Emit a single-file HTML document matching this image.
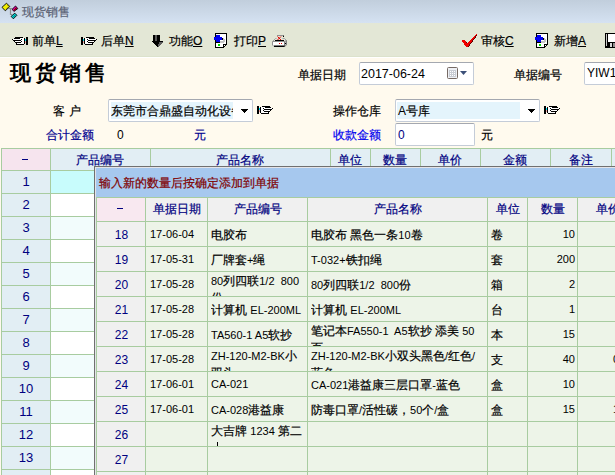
<!DOCTYPE html><html><head><meta charset="utf-8"><style>
*{margin:0;padding:0;box-sizing:border-box}
html,body{width:615px;height:475px;overflow:hidden;background:#fffaee;font-family:"Liberation Sans",sans-serif;font-size:12px;color:#000;-webkit-text-stroke-width:0.2px}
div,span.a{position:absolute;white-space:nowrap}
svg{position:absolute;shape-rendering:crispEdges}
.u{text-decoration:underline;position:static}
.u0{position:static;-webkit-text-stroke-width:0}
.box{background:#fff;border:1px solid #c4ccd8;border-top-color:#a4a8b0;border-radius:2px}
.hd{color:#1c1c8c;text-align:center}
.c{text-align:center}
.r{text-align:right}
</style></head><body>
<div style="left:0px;top:0px;width:615px;height:23px;background:linear-gradient(#c1cedc,#d5e2f2)"></div>
<svg style="left:0;top:0;shape-rendering:auto" width="20" height="22" viewBox="0 0 20 22"><path d="M8.5 8.5 H12.5 M10.5 8.5 V14.5 H12" stroke="#8c8c8c" stroke-width="1.2" fill="none"/><path d="M6.5 3.2 L9.8 6.5 L5.3 10.8 L2 7.3 Z" fill="#f0f000" stroke="#000" stroke-width="0.9"/><path d="M7 5 L8.5 6.5 L5.5 9.5" stroke="#b0a000" stroke-width="0.8" fill="none"/><path d="M15.5 6 L17.8 8.6 L13.9 11.4 L12.2 9.3 Z" fill="#e000c0" stroke="#000" stroke-width="0.9"/><path d="M16.5 7.8 L14 10.5" stroke="#900000" stroke-width="1.3"/><path d="M14.8 13.2 L16.9 15.3 L13.4 18.8 L11.1 16.4 Z" fill="#00d8d8" stroke="#000" stroke-width="0.9"/><path d="M15.6 14.6 L13 17.4" stroke="#007070" stroke-width="1"/></svg>
<div style="left:22px;top:4px;color:#5a6274">现货销售</div>
<div style="left:0px;top:23px;width:615px;height:34px;background:#e3e7d6"></div>
<div style="left:0px;top:56px;width:615px;height:1px;background:#dce2cc"></div>
<div style="left:0px;top:57px;width:615px;height:1px;background:#ffffff"></div>
<div style="left:32px;top:33px;">前单<span class="u">L</span></div>
<div style="left:101px;top:33px;">后单<span class="u">N</span></div>
<div style="left:169px;top:33px;">功能<span class="u">O</span></div>
<div style="left:234px;top:33px;">打印<span class="u">P</span></div>
<div style="left:481px;top:33px;">审核<span class="u">C</span></div>
<div style="left:554px;top:33px;">新增<span class="u">A</span></div>
<svg style="left:12px;top:37px" width="16" height="8" viewBox="0 0 16 8"><rect x="3" y="0" width="1" height="1" fill="#000"/><rect x="4" y="0" width="1" height="1" fill="#000"/><rect x="5" y="0" width="1" height="1" fill="#000"/><rect x="6" y="0" width="1" height="1" fill="#000"/><rect x="7" y="0" width="1" height="1" fill="#000"/><rect x="8" y="0" width="1" height="1" fill="#000"/><rect x="9" y="0" width="1" height="1" fill="#000"/><rect x="10" y="0" width="1" height="1" fill="#000"/><rect x="14" y="0" width="1" height="1" fill="#000"/><rect x="15" y="0" width="1" height="1" fill="#000"/><rect x="2" y="1" width="1" height="1" fill="#000"/><rect x="3" y="1" width="1" height="1" fill="#000"/><rect x="4" y="1" width="1" height="1" fill="#000"/><rect x="5" y="1" width="1" height="1" fill="#000"/><rect x="6" y="1" width="1" height="1" fill="#000"/><rect x="7" y="1" width="1" height="1" fill="#000"/><rect x="8" y="1" width="1" height="1" fill="#fff"/><rect x="9" y="1" width="1" height="1" fill="#fff"/><rect x="10" y="1" width="1" height="1" fill="#fff"/><rect x="11" y="1" width="1" height="1" fill="#fff"/><rect x="12" y="1" width="1" height="1" fill="#000"/><rect x="14" y="1" width="1" height="1" fill="#000"/><rect x="15" y="1" width="1" height="1" fill="#000"/><rect x="0" y="2" width="1" height="1" fill="#000"/><rect x="1" y="2" width="1" height="1" fill="#fff"/><rect x="2" y="2" width="1" height="1" fill="#fff"/><rect x="3" y="2" width="1" height="1" fill="#fff"/><rect x="4" y="2" width="1" height="1" fill="#fff"/><rect x="5" y="2" width="1" height="1" fill="#fff"/><rect x="6" y="2" width="1" height="1" fill="#fff"/><rect x="7" y="2" width="1" height="1" fill="#fff"/><rect x="8" y="2" width="1" height="1" fill="#fff"/><rect x="9" y="2" width="1" height="1" fill="#000"/><rect x="10" y="2" width="1" height="1" fill="#fff"/><rect x="11" y="2" width="1" height="1" fill="#fff"/><rect x="12" y="2" width="1" height="1" fill="#000"/><rect x="13" y="2" width="1" height="1" fill="#00e0f0"/><rect x="14" y="2" width="1" height="1" fill="#000"/><rect x="15" y="2" width="1" height="1" fill="#000"/><rect x="1" y="3" width="1" height="1" fill="#000"/><rect x="2" y="3" width="1" height="1" fill="#000"/><rect x="3" y="3" width="1" height="1" fill="#000"/><rect x="4" y="3" width="1" height="1" fill="#000"/><rect x="5" y="3" width="1" height="1" fill="#000"/><rect x="6" y="3" width="1" height="1" fill="#000"/><rect x="7" y="3" width="1" height="1" fill="#000"/><rect x="8" y="3" width="1" height="1" fill="#000"/><rect x="9" y="3" width="1" height="1" fill="#fff"/><rect x="10" y="3" width="1" height="1" fill="#fff"/><rect x="11" y="3" width="1" height="1" fill="#fff"/><rect x="12" y="3" width="1" height="1" fill="#000"/><rect x="13" y="3" width="1" height="1" fill="#00e0f0"/><rect x="14" y="3" width="1" height="1" fill="#000"/><rect x="15" y="3" width="1" height="1" fill="#000"/><rect x="2" y="4" width="1" height="1" fill="#000"/><rect x="3" y="4" width="1" height="1" fill="#fff"/><rect x="4" y="4" width="1" height="1" fill="#fff"/><rect x="5" y="4" width="1" height="1" fill="#fff"/><rect x="6" y="4" width="1" height="1" fill="#fff"/><rect x="7" y="4" width="1" height="1" fill="#fff"/><rect x="8" y="4" width="1" height="1" fill="#fff"/><rect x="9" y="4" width="1" height="1" fill="#000"/><rect x="10" y="4" width="1" height="1" fill="#fff"/><rect x="11" y="4" width="1" height="1" fill="#fff"/><rect x="12" y="4" width="1" height="1" fill="#000"/><rect x="13" y="4" width="1" height="1" fill="#e8a0a0"/><rect x="14" y="4" width="1" height="1" fill="#000"/><rect x="15" y="4" width="1" height="1" fill="#000"/><rect x="3" y="5" width="1" height="1" fill="#000"/><rect x="4" y="5" width="1" height="1" fill="#000"/><rect x="5" y="5" width="1" height="1" fill="#000"/><rect x="6" y="5" width="1" height="1" fill="#000"/><rect x="7" y="5" width="1" height="1" fill="#000"/><rect x="8" y="5" width="1" height="1" fill="#000"/><rect x="9" y="5" width="1" height="1" fill="#fff"/><rect x="10" y="5" width="1" height="1" fill="#fff"/><rect x="11" y="5" width="1" height="1" fill="#fff"/><rect x="12" y="5" width="1" height="1" fill="#000"/><rect x="13" y="5" width="1" height="1" fill="#e8a0a0"/><rect x="14" y="5" width="1" height="1" fill="#000"/><rect x="15" y="5" width="1" height="1" fill="#000"/><rect x="4" y="6" width="1" height="1" fill="#000"/><rect x="5" y="6" width="1" height="1" fill="#fff"/><rect x="6" y="6" width="1" height="1" fill="#fff"/><rect x="7" y="6" width="1" height="1" fill="#fff"/><rect x="8" y="6" width="1" height="1" fill="#fff"/><rect x="9" y="6" width="1" height="1" fill="#fff"/><rect x="10" y="6" width="1" height="1" fill="#fff"/><rect x="11" y="6" width="1" height="1" fill="#fff"/><rect x="12" y="6" width="1" height="1" fill="#000"/><rect x="14" y="6" width="1" height="1" fill="#000"/><rect x="15" y="6" width="1" height="1" fill="#000"/><rect x="4" y="7" width="1" height="1" fill="#000"/><rect x="5" y="7" width="1" height="1" fill="#000"/><rect x="6" y="7" width="1" height="1" fill="#000"/><rect x="7" y="7" width="1" height="1" fill="#000"/><rect x="8" y="7" width="1" height="1" fill="#000"/><rect x="9" y="7" width="1" height="1" fill="#000"/><rect x="10" y="7" width="1" height="1" fill="#000"/><rect x="11" y="7" width="1" height="1" fill="#000"/><rect x="14" y="7" width="1" height="1" fill="#000"/><rect x="15" y="7" width="1" height="1" fill="#000"/></svg>
<svg style="left:81px;top:37px" width="16" height="8" viewBox="0 0 16 8"><rect x="0" y="0" width="1" height="1" fill="#000"/><rect x="1" y="0" width="1" height="1" fill="#000"/><rect x="5" y="0" width="1" height="1" fill="#000"/><rect x="6" y="0" width="1" height="1" fill="#000"/><rect x="7" y="0" width="1" height="1" fill="#000"/><rect x="8" y="0" width="1" height="1" fill="#000"/><rect x="9" y="0" width="1" height="1" fill="#000"/><rect x="10" y="0" width="1" height="1" fill="#000"/><rect x="11" y="0" width="1" height="1" fill="#000"/><rect x="12" y="0" width="1" height="1" fill="#000"/><rect x="0" y="1" width="1" height="1" fill="#000"/><rect x="1" y="1" width="1" height="1" fill="#000"/><rect x="3" y="1" width="1" height="1" fill="#000"/><rect x="4" y="1" width="1" height="1" fill="#fff"/><rect x="5" y="1" width="1" height="1" fill="#fff"/><rect x="6" y="1" width="1" height="1" fill="#fff"/><rect x="7" y="1" width="1" height="1" fill="#fff"/><rect x="8" y="1" width="1" height="1" fill="#000"/><rect x="9" y="1" width="1" height="1" fill="#000"/><rect x="10" y="1" width="1" height="1" fill="#000"/><rect x="11" y="1" width="1" height="1" fill="#000"/><rect x="12" y="1" width="1" height="1" fill="#000"/><rect x="13" y="1" width="1" height="1" fill="#000"/><rect x="0" y="2" width="1" height="1" fill="#000"/><rect x="1" y="2" width="1" height="1" fill="#000"/><rect x="2" y="2" width="1" height="1" fill="#00e0f0"/><rect x="3" y="2" width="1" height="1" fill="#000"/><rect x="4" y="2" width="1" height="1" fill="#fff"/><rect x="5" y="2" width="1" height="1" fill="#fff"/><rect x="6" y="2" width="1" height="1" fill="#000"/><rect x="7" y="2" width="1" height="1" fill="#fff"/><rect x="8" y="2" width="1" height="1" fill="#fff"/><rect x="9" y="2" width="1" height="1" fill="#fff"/><rect x="10" y="2" width="1" height="1" fill="#fff"/><rect x="11" y="2" width="1" height="1" fill="#fff"/><rect x="12" y="2" width="1" height="1" fill="#fff"/><rect x="13" y="2" width="1" height="1" fill="#fff"/><rect x="14" y="2" width="1" height="1" fill="#fff"/><rect x="15" y="2" width="1" height="1" fill="#000"/><rect x="0" y="3" width="1" height="1" fill="#000"/><rect x="1" y="3" width="1" height="1" fill="#000"/><rect x="2" y="3" width="1" height="1" fill="#00e0f0"/><rect x="3" y="3" width="1" height="1" fill="#000"/><rect x="4" y="3" width="1" height="1" fill="#fff"/><rect x="5" y="3" width="1" height="1" fill="#fff"/><rect x="6" y="3" width="1" height="1" fill="#fff"/><rect x="7" y="3" width="1" height="1" fill="#000"/><rect x="8" y="3" width="1" height="1" fill="#000"/><rect x="9" y="3" width="1" height="1" fill="#000"/><rect x="10" y="3" width="1" height="1" fill="#000"/><rect x="11" y="3" width="1" height="1" fill="#000"/><rect x="12" y="3" width="1" height="1" fill="#000"/><rect x="13" y="3" width="1" height="1" fill="#000"/><rect x="14" y="3" width="1" height="1" fill="#000"/><rect x="0" y="4" width="1" height="1" fill="#000"/><rect x="1" y="4" width="1" height="1" fill="#000"/><rect x="2" y="4" width="1" height="1" fill="#e8a0a0"/><rect x="3" y="4" width="1" height="1" fill="#000"/><rect x="4" y="4" width="1" height="1" fill="#fff"/><rect x="5" y="4" width="1" height="1" fill="#fff"/><rect x="6" y="4" width="1" height="1" fill="#000"/><rect x="7" y="4" width="1" height="1" fill="#fff"/><rect x="8" y="4" width="1" height="1" fill="#fff"/><rect x="9" y="4" width="1" height="1" fill="#fff"/><rect x="10" y="4" width="1" height="1" fill="#fff"/><rect x="11" y="4" width="1" height="1" fill="#fff"/><rect x="12" y="4" width="1" height="1" fill="#fff"/><rect x="13" y="4" width="1" height="1" fill="#000"/><rect x="0" y="5" width="1" height="1" fill="#000"/><rect x="1" y="5" width="1" height="1" fill="#000"/><rect x="2" y="5" width="1" height="1" fill="#e8a0a0"/><rect x="3" y="5" width="1" height="1" fill="#000"/><rect x="4" y="5" width="1" height="1" fill="#fff"/><rect x="5" y="5" width="1" height="1" fill="#fff"/><rect x="6" y="5" width="1" height="1" fill="#fff"/><rect x="7" y="5" width="1" height="1" fill="#000"/><rect x="8" y="5" width="1" height="1" fill="#000"/><rect x="9" y="5" width="1" height="1" fill="#000"/><rect x="10" y="5" width="1" height="1" fill="#000"/><rect x="11" y="5" width="1" height="1" fill="#000"/><rect x="12" y="5" width="1" height="1" fill="#000"/><rect x="0" y="6" width="1" height="1" fill="#000"/><rect x="1" y="6" width="1" height="1" fill="#000"/><rect x="3" y="6" width="1" height="1" fill="#000"/><rect x="4" y="6" width="1" height="1" fill="#fff"/><rect x="5" y="6" width="1" height="1" fill="#fff"/><rect x="6" y="6" width="1" height="1" fill="#fff"/><rect x="7" y="6" width="1" height="1" fill="#fff"/><rect x="8" y="6" width="1" height="1" fill="#fff"/><rect x="9" y="6" width="1" height="1" fill="#fff"/><rect x="10" y="6" width="1" height="1" fill="#fff"/><rect x="11" y="6" width="1" height="1" fill="#000"/><rect x="0" y="7" width="1" height="1" fill="#000"/><rect x="1" y="7" width="1" height="1" fill="#000"/><rect x="4" y="7" width="1" height="1" fill="#000"/><rect x="5" y="7" width="1" height="1" fill="#000"/><rect x="6" y="7" width="1" height="1" fill="#000"/><rect x="7" y="7" width="1" height="1" fill="#000"/><rect x="8" y="7" width="1" height="1" fill="#000"/><rect x="9" y="7" width="1" height="1" fill="#000"/><rect x="10" y="7" width="1" height="1" fill="#000"/><rect x="11" y="7" width="1" height="1" fill="#000"/></svg>
<svg style="left:150px;top:34px" width="15" height="14" viewBox="0 0 15 14"><rect x="3" y="1" width="7" height="7" fill="#000"/><rect x="5" y="1" width="2" height="6" fill="#fff" opacity="0.35"/><path d="M1 7 H13 L7 13 Z" fill="#000"/><path d="M9 8 L13 8 L8 13 Z" fill="#606060"/></svg>
<svg style="left:213px;top:33px" width="15" height="15" viewBox="0 0 15 15"><rect x="2" y="0" width="12" height="15" fill="#000"/><rect x="3" y="1" width="10" height="13" fill="#fff"/>
<path d="M10 15 L14 11 L14 15 Z" fill="#e3e5d5"/><rect x="13" y="11" width="1" height="1" fill="#000"/><rect x="12" y="12" width="1" height="1" fill="#000"/><rect x="11" y="13" width="1" height="1" fill="#000"/><rect x="10" y="14" width="1" height="1" fill="#000"/><rect x="10" y="11" width="3" height="1" fill="#000"/><rect x="10" y="11" width="1" height="3" fill="#000"/><rect x="11" y="12" width="1" height="1" fill="#fff"/>
<path d="M10 5 Q12 5 12 8 Q12 10 9 10 H6 V8 H10 Z" fill="#c4c4c4"/>
<rect x="1" y="4" width="8" height="3" fill="#0000f0"/><rect x="3" y="2" width="4" height="7" fill="#0000f0"/>
<rect x="9" y="5" width="1" height="2" fill="#000"/><rect x="3" y="9" width="4" height="1" fill="#000"/>
<rect x="5" y="11" width="2" height="2" fill="#00e000"/></svg>
<svg style="left:534px;top:33px" width="15" height="15" viewBox="0 0 15 15"><rect x="2" y="0" width="12" height="15" fill="#000"/><rect x="3" y="1" width="10" height="13" fill="#fff"/>
<path d="M10 15 L14 11 L14 15 Z" fill="#e3e5d5"/><rect x="13" y="11" width="1" height="1" fill="#000"/><rect x="12" y="12" width="1" height="1" fill="#000"/><rect x="11" y="13" width="1" height="1" fill="#000"/><rect x="10" y="14" width="1" height="1" fill="#000"/><rect x="10" y="11" width="3" height="1" fill="#000"/><rect x="10" y="11" width="1" height="3" fill="#000"/><rect x="11" y="12" width="1" height="1" fill="#fff"/>
<path d="M10 5 Q12 5 12 8 Q12 10 9 10 H6 V8 H10 Z" fill="#c4c4c4"/>
<rect x="1" y="4" width="8" height="3" fill="#0000f0"/><rect x="3" y="2" width="4" height="7" fill="#0000f0"/>
<rect x="9" y="5" width="1" height="2" fill="#000"/><rect x="3" y="9" width="4" height="1" fill="#000"/>
<rect x="5" y="11" width="2" height="2" fill="#00e000"/></svg>
<svg style="left:272px;top:34px;shape-rendering:auto" width="16" height="14" viewBox="0 0 16 14"><rect x="5" y="1" width="6" height="1" fill="#909090"/><rect x="11" y="1.5" width="1" height="1.5" fill="#000"/><path d="M5.5 2.5 L9 6 M9 2.5 L5.5 6" stroke="#e00000" stroke-width="1"/><path d="M0.5 7.5 L3.5 4.5 H4.5 M10.5 4.5 H12.5 L14.5 6.5" stroke="#a0a0a0" fill="none"/><rect x="3" y="6" width="9" height="1.2" fill="#000"/><path d="M0.5 7.5 H12.5 V12.5 H2 L0.5 11 Z" fill="#fff" stroke="#909090"/><path d="M12.5 7.5 L14.5 6.5 V11 L12.5 12.5 Z" fill="#b8b8b8" stroke="#808080"/><rect x="13" y="9" width="1" height="1" fill="#000"/><rect x="2" y="11.5" width="10.5" height="1.5" fill="#000"/><rect x="7" y="9" width="1" height="1" fill="#e00000"/><rect x="9" y="9" width="1" height="1" fill="#e00000"/></svg>
<svg style="left:460px;top:33px" width="18" height="15" viewBox="0 0 18 15" ><path d="M1.5 7.5 L4 6.5 L7 10.5 L16 1 L17 1.5 L7.5 14 L6 14 Z" fill="#600000" transform="translate(0.6,0.4)"/><path d="M1.5 7.5 L4 6.5 L7 10.5 L16 1 L17 1.5 L7.5 14 L6 14 Z" fill="#f00000"/></svg>
<svg style="left:605px;top:33px" width="10" height="15" viewBox="0 0 10 15"><rect x="0" y="0" width="10" height="15" fill="#000"/><rect x="1" y="1" width="1" height="12" fill="#c8c8c8"/><rect x="3" y="1" width="7" height="8" fill="#fff"/><rect x="5" y="10" width="2" height="4" fill="#d8d8d8"/><rect x="8" y="10" width="2" height="4" fill="#909090"/></svg>
<div style="left:10px;top:59px;font-size:21px;font-weight:bold;letter-spacing:4px;-webkit-text-stroke-width:0">现货销售</div>
<div style="left:298px;top:67px;">单据日期</div>
<div class="box" style="left:359px;top:62px;width:115px;height:23px;"></div>
<div style="left:361px;top:66.5px;font-size:12.5px"><span class="u0">2017-06-24</span></div>
<div style="left:514px;top:67px;">单据编号</div>
<div class="box" style="left:584px;top:62px;width:40px;height:23px;"></div>
<div style="left:587px;top:66px;"><span class="u0">YIW1</span></div>
<div style="left:53px;top:103px;letter-spacing:4px">客户</div>
<div class="box" style="left:108px;top:99px;width:145px;height:23px;"></div>
<div style="left:111px;top:102px;width:122px;height:17px;background:#e4f4fc"></div>
<div style="left:111px;top:103px;width:122px;overflow:hidden">东莞市合鼎盛自动化设备</div>
<div style="left:333px;top:103px;">操作仓库</div>
<div class="box" style="left:395px;top:99px;width:145px;height:23px;"></div>
<div style="left:397px;top:102px;width:123px;height:17px;background:#e4f4fc"></div>
<div style="left:398px;top:103px;"><span class="u0">A</span>号库</div>
<svg style="left:241px;top:109px" width="8" height="5" viewBox="0 0 8 5"><path d="M0 0 H7 L3.5 4 Z" fill="#000"/></svg>
<svg style="left:528px;top:109px" width="8" height="5" viewBox="0 0 8 5"><path d="M0 0 H7 L3.5 4 Z" fill="#000"/></svg>
<svg style="left:257px;top:106px" width="16" height="8" viewBox="0 0 16 8"><rect x="0" y="0" width="1" height="1" fill="#000"/><rect x="1" y="0" width="1" height="1" fill="#000"/><rect x="5" y="0" width="1" height="1" fill="#000"/><rect x="6" y="0" width="1" height="1" fill="#000"/><rect x="7" y="0" width="1" height="1" fill="#000"/><rect x="8" y="0" width="1" height="1" fill="#000"/><rect x="9" y="0" width="1" height="1" fill="#000"/><rect x="10" y="0" width="1" height="1" fill="#000"/><rect x="11" y="0" width="1" height="1" fill="#000"/><rect x="12" y="0" width="1" height="1" fill="#000"/><rect x="0" y="1" width="1" height="1" fill="#000"/><rect x="1" y="1" width="1" height="1" fill="#000"/><rect x="3" y="1" width="1" height="1" fill="#000"/><rect x="4" y="1" width="1" height="1" fill="#fff"/><rect x="5" y="1" width="1" height="1" fill="#fff"/><rect x="6" y="1" width="1" height="1" fill="#fff"/><rect x="7" y="1" width="1" height="1" fill="#fff"/><rect x="8" y="1" width="1" height="1" fill="#000"/><rect x="9" y="1" width="1" height="1" fill="#000"/><rect x="10" y="1" width="1" height="1" fill="#000"/><rect x="11" y="1" width="1" height="1" fill="#000"/><rect x="12" y="1" width="1" height="1" fill="#000"/><rect x="13" y="1" width="1" height="1" fill="#000"/><rect x="0" y="2" width="1" height="1" fill="#000"/><rect x="1" y="2" width="1" height="1" fill="#000"/><rect x="2" y="2" width="1" height="1" fill="#00e0f0"/><rect x="3" y="2" width="1" height="1" fill="#000"/><rect x="4" y="2" width="1" height="1" fill="#fff"/><rect x="5" y="2" width="1" height="1" fill="#fff"/><rect x="6" y="2" width="1" height="1" fill="#000"/><rect x="7" y="2" width="1" height="1" fill="#fff"/><rect x="8" y="2" width="1" height="1" fill="#fff"/><rect x="9" y="2" width="1" height="1" fill="#fff"/><rect x="10" y="2" width="1" height="1" fill="#fff"/><rect x="11" y="2" width="1" height="1" fill="#fff"/><rect x="12" y="2" width="1" height="1" fill="#fff"/><rect x="13" y="2" width="1" height="1" fill="#fff"/><rect x="14" y="2" width="1" height="1" fill="#fff"/><rect x="15" y="2" width="1" height="1" fill="#000"/><rect x="0" y="3" width="1" height="1" fill="#000"/><rect x="1" y="3" width="1" height="1" fill="#000"/><rect x="2" y="3" width="1" height="1" fill="#00e0f0"/><rect x="3" y="3" width="1" height="1" fill="#000"/><rect x="4" y="3" width="1" height="1" fill="#fff"/><rect x="5" y="3" width="1" height="1" fill="#fff"/><rect x="6" y="3" width="1" height="1" fill="#fff"/><rect x="7" y="3" width="1" height="1" fill="#000"/><rect x="8" y="3" width="1" height="1" fill="#000"/><rect x="9" y="3" width="1" height="1" fill="#000"/><rect x="10" y="3" width="1" height="1" fill="#000"/><rect x="11" y="3" width="1" height="1" fill="#000"/><rect x="12" y="3" width="1" height="1" fill="#000"/><rect x="13" y="3" width="1" height="1" fill="#000"/><rect x="14" y="3" width="1" height="1" fill="#000"/><rect x="0" y="4" width="1" height="1" fill="#000"/><rect x="1" y="4" width="1" height="1" fill="#000"/><rect x="2" y="4" width="1" height="1" fill="#e8a0a0"/><rect x="3" y="4" width="1" height="1" fill="#000"/><rect x="4" y="4" width="1" height="1" fill="#fff"/><rect x="5" y="4" width="1" height="1" fill="#fff"/><rect x="6" y="4" width="1" height="1" fill="#000"/><rect x="7" y="4" width="1" height="1" fill="#fff"/><rect x="8" y="4" width="1" height="1" fill="#fff"/><rect x="9" y="4" width="1" height="1" fill="#fff"/><rect x="10" y="4" width="1" height="1" fill="#fff"/><rect x="11" y="4" width="1" height="1" fill="#fff"/><rect x="12" y="4" width="1" height="1" fill="#fff"/><rect x="13" y="4" width="1" height="1" fill="#000"/><rect x="0" y="5" width="1" height="1" fill="#000"/><rect x="1" y="5" width="1" height="1" fill="#000"/><rect x="2" y="5" width="1" height="1" fill="#e8a0a0"/><rect x="3" y="5" width="1" height="1" fill="#000"/><rect x="4" y="5" width="1" height="1" fill="#fff"/><rect x="5" y="5" width="1" height="1" fill="#fff"/><rect x="6" y="5" width="1" height="1" fill="#fff"/><rect x="7" y="5" width="1" height="1" fill="#000"/><rect x="8" y="5" width="1" height="1" fill="#000"/><rect x="9" y="5" width="1" height="1" fill="#000"/><rect x="10" y="5" width="1" height="1" fill="#000"/><rect x="11" y="5" width="1" height="1" fill="#000"/><rect x="12" y="5" width="1" height="1" fill="#000"/><rect x="0" y="6" width="1" height="1" fill="#000"/><rect x="1" y="6" width="1" height="1" fill="#000"/><rect x="3" y="6" width="1" height="1" fill="#000"/><rect x="4" y="6" width="1" height="1" fill="#fff"/><rect x="5" y="6" width="1" height="1" fill="#fff"/><rect x="6" y="6" width="1" height="1" fill="#fff"/><rect x="7" y="6" width="1" height="1" fill="#fff"/><rect x="8" y="6" width="1" height="1" fill="#fff"/><rect x="9" y="6" width="1" height="1" fill="#fff"/><rect x="10" y="6" width="1" height="1" fill="#fff"/><rect x="11" y="6" width="1" height="1" fill="#000"/><rect x="0" y="7" width="1" height="1" fill="#000"/><rect x="1" y="7" width="1" height="1" fill="#000"/><rect x="4" y="7" width="1" height="1" fill="#000"/><rect x="5" y="7" width="1" height="1" fill="#000"/><rect x="6" y="7" width="1" height="1" fill="#000"/><rect x="7" y="7" width="1" height="1" fill="#000"/><rect x="8" y="7" width="1" height="1" fill="#000"/><rect x="9" y="7" width="1" height="1" fill="#000"/><rect x="10" y="7" width="1" height="1" fill="#000"/><rect x="11" y="7" width="1" height="1" fill="#000"/></svg>
<svg style="left:544px;top:106px" width="16" height="8" viewBox="0 0 16 8"><rect x="0" y="0" width="1" height="1" fill="#000"/><rect x="1" y="0" width="1" height="1" fill="#000"/><rect x="5" y="0" width="1" height="1" fill="#000"/><rect x="6" y="0" width="1" height="1" fill="#000"/><rect x="7" y="0" width="1" height="1" fill="#000"/><rect x="8" y="0" width="1" height="1" fill="#000"/><rect x="9" y="0" width="1" height="1" fill="#000"/><rect x="10" y="0" width="1" height="1" fill="#000"/><rect x="11" y="0" width="1" height="1" fill="#000"/><rect x="12" y="0" width="1" height="1" fill="#000"/><rect x="0" y="1" width="1" height="1" fill="#000"/><rect x="1" y="1" width="1" height="1" fill="#000"/><rect x="3" y="1" width="1" height="1" fill="#000"/><rect x="4" y="1" width="1" height="1" fill="#fff"/><rect x="5" y="1" width="1" height="1" fill="#fff"/><rect x="6" y="1" width="1" height="1" fill="#fff"/><rect x="7" y="1" width="1" height="1" fill="#fff"/><rect x="8" y="1" width="1" height="1" fill="#000"/><rect x="9" y="1" width="1" height="1" fill="#000"/><rect x="10" y="1" width="1" height="1" fill="#000"/><rect x="11" y="1" width="1" height="1" fill="#000"/><rect x="12" y="1" width="1" height="1" fill="#000"/><rect x="13" y="1" width="1" height="1" fill="#000"/><rect x="0" y="2" width="1" height="1" fill="#000"/><rect x="1" y="2" width="1" height="1" fill="#000"/><rect x="2" y="2" width="1" height="1" fill="#00e0f0"/><rect x="3" y="2" width="1" height="1" fill="#000"/><rect x="4" y="2" width="1" height="1" fill="#fff"/><rect x="5" y="2" width="1" height="1" fill="#fff"/><rect x="6" y="2" width="1" height="1" fill="#000"/><rect x="7" y="2" width="1" height="1" fill="#fff"/><rect x="8" y="2" width="1" height="1" fill="#fff"/><rect x="9" y="2" width="1" height="1" fill="#fff"/><rect x="10" y="2" width="1" height="1" fill="#fff"/><rect x="11" y="2" width="1" height="1" fill="#fff"/><rect x="12" y="2" width="1" height="1" fill="#fff"/><rect x="13" y="2" width="1" height="1" fill="#fff"/><rect x="14" y="2" width="1" height="1" fill="#fff"/><rect x="15" y="2" width="1" height="1" fill="#000"/><rect x="0" y="3" width="1" height="1" fill="#000"/><rect x="1" y="3" width="1" height="1" fill="#000"/><rect x="2" y="3" width="1" height="1" fill="#00e0f0"/><rect x="3" y="3" width="1" height="1" fill="#000"/><rect x="4" y="3" width="1" height="1" fill="#fff"/><rect x="5" y="3" width="1" height="1" fill="#fff"/><rect x="6" y="3" width="1" height="1" fill="#fff"/><rect x="7" y="3" width="1" height="1" fill="#000"/><rect x="8" y="3" width="1" height="1" fill="#000"/><rect x="9" y="3" width="1" height="1" fill="#000"/><rect x="10" y="3" width="1" height="1" fill="#000"/><rect x="11" y="3" width="1" height="1" fill="#000"/><rect x="12" y="3" width="1" height="1" fill="#000"/><rect x="13" y="3" width="1" height="1" fill="#000"/><rect x="14" y="3" width="1" height="1" fill="#000"/><rect x="0" y="4" width="1" height="1" fill="#000"/><rect x="1" y="4" width="1" height="1" fill="#000"/><rect x="2" y="4" width="1" height="1" fill="#e8a0a0"/><rect x="3" y="4" width="1" height="1" fill="#000"/><rect x="4" y="4" width="1" height="1" fill="#fff"/><rect x="5" y="4" width="1" height="1" fill="#fff"/><rect x="6" y="4" width="1" height="1" fill="#000"/><rect x="7" y="4" width="1" height="1" fill="#fff"/><rect x="8" y="4" width="1" height="1" fill="#fff"/><rect x="9" y="4" width="1" height="1" fill="#fff"/><rect x="10" y="4" width="1" height="1" fill="#fff"/><rect x="11" y="4" width="1" height="1" fill="#fff"/><rect x="12" y="4" width="1" height="1" fill="#fff"/><rect x="13" y="4" width="1" height="1" fill="#000"/><rect x="0" y="5" width="1" height="1" fill="#000"/><rect x="1" y="5" width="1" height="1" fill="#000"/><rect x="2" y="5" width="1" height="1" fill="#e8a0a0"/><rect x="3" y="5" width="1" height="1" fill="#000"/><rect x="4" y="5" width="1" height="1" fill="#fff"/><rect x="5" y="5" width="1" height="1" fill="#fff"/><rect x="6" y="5" width="1" height="1" fill="#fff"/><rect x="7" y="5" width="1" height="1" fill="#000"/><rect x="8" y="5" width="1" height="1" fill="#000"/><rect x="9" y="5" width="1" height="1" fill="#000"/><rect x="10" y="5" width="1" height="1" fill="#000"/><rect x="11" y="5" width="1" height="1" fill="#000"/><rect x="12" y="5" width="1" height="1" fill="#000"/><rect x="0" y="6" width="1" height="1" fill="#000"/><rect x="1" y="6" width="1" height="1" fill="#000"/><rect x="3" y="6" width="1" height="1" fill="#000"/><rect x="4" y="6" width="1" height="1" fill="#fff"/><rect x="5" y="6" width="1" height="1" fill="#fff"/><rect x="6" y="6" width="1" height="1" fill="#fff"/><rect x="7" y="6" width="1" height="1" fill="#fff"/><rect x="8" y="6" width="1" height="1" fill="#fff"/><rect x="9" y="6" width="1" height="1" fill="#fff"/><rect x="10" y="6" width="1" height="1" fill="#fff"/><rect x="11" y="6" width="1" height="1" fill="#000"/><rect x="0" y="7" width="1" height="1" fill="#000"/><rect x="1" y="7" width="1" height="1" fill="#000"/><rect x="4" y="7" width="1" height="1" fill="#000"/><rect x="5" y="7" width="1" height="1" fill="#000"/><rect x="6" y="7" width="1" height="1" fill="#000"/><rect x="7" y="7" width="1" height="1" fill="#000"/><rect x="8" y="7" width="1" height="1" fill="#000"/><rect x="9" y="7" width="1" height="1" fill="#000"/><rect x="10" y="7" width="1" height="1" fill="#000"/><rect x="11" y="7" width="1" height="1" fill="#000"/></svg>
<svg style="left:447px;top:67px;shape-rendering:auto" width="21" height="13" viewBox="0 0 21 13"><rect x="0.5" y="0.5" width="10" height="11" rx="1" fill="#eef0f4" stroke="#766a64"/><rect x="2" y="3" width="7" height="7" fill="#c8ccd4"/><g fill="#fff"><rect x="3" y="4" width="1" height="1"/><rect x="5" y="4" width="1" height="1"/><rect x="7" y="4" width="1" height="1"/><rect x="3" y="6" width="1" height="1"/><rect x="5" y="6" width="1" height="1"/><rect x="7" y="6" width="1" height="1"/><rect x="3" y="8" width="1" height="1"/><rect x="5" y="8" width="1" height="1"/><rect x="7" y="8" width="1" height="1"/></g><path d="M13 4 H20 L16.5 8 Z" fill="#3c5078"/></svg>
<div style="left:46px;top:127px;color:#000090">合计金额</div>
<div style="left:117px;top:128px;"><span class="u0">0</span></div>
<div style="left:194px;top:127px;color:#000090">元</div>
<div style="left:333px;top:127px;color:#0000f0">收款金额</div>
<div class="box" style="left:395px;top:123px;width:80px;height:23px;"></div>
<div style="left:398px;top:128px;color:#000080"><span class="u0">0</span></div>
<div style="left:481px;top:127px;">元</div>
<div style="left:1px;top:148px;width:614px;height:23px;background:#e2eef4"></div>
<div style="left:2px;top:149px;width:48px;height:21px;background:#f6e4ee"></div>
<div style="left:1px;top:170px;width:49px;height:23px;background:#e2eef4"></div>
<div style="left:51px;top:171px;width:563px;height:22px;background:#c8fcfc"></div>
<div style="left:1px;top:174px;width:50px;text-align:center;font-size:13px;color:#000080"><span class="u0">1</span></div>
<div style="left:1px;top:193px;width:49px;height:23px;background:#e2eef4"></div>
<div style="left:51px;top:194px;width:563px;height:22px;background:#ffffff"></div>
<div style="left:1px;top:197px;width:50px;text-align:center;font-size:13px;color:#000080"><span class="u0">2</span></div>
<div style="left:1px;top:216px;width:49px;height:23px;background:#e2eef4"></div>
<div style="left:51px;top:217px;width:563px;height:22px;background:#f2fcfc"></div>
<div style="left:1px;top:220px;width:50px;text-align:center;font-size:13px;color:#000080"><span class="u0">3</span></div>
<div style="left:1px;top:239px;width:49px;height:23px;background:#e2eef4"></div>
<div style="left:51px;top:240px;width:563px;height:22px;background:#ffffff"></div>
<div style="left:1px;top:243px;width:50px;text-align:center;font-size:13px;color:#000080"><span class="u0">4</span></div>
<div style="left:1px;top:262px;width:49px;height:23px;background:#e2eef4"></div>
<div style="left:51px;top:263px;width:563px;height:22px;background:#f2fcfc"></div>
<div style="left:1px;top:266px;width:50px;text-align:center;font-size:13px;color:#000080"><span class="u0">5</span></div>
<div style="left:1px;top:285px;width:49px;height:23px;background:#e2eef4"></div>
<div style="left:51px;top:286px;width:563px;height:22px;background:#ffffff"></div>
<div style="left:1px;top:289px;width:50px;text-align:center;font-size:13px;color:#000080"><span class="u0">6</span></div>
<div style="left:1px;top:308px;width:49px;height:23px;background:#e2eef4"></div>
<div style="left:51px;top:309px;width:563px;height:22px;background:#f2fcfc"></div>
<div style="left:1px;top:312px;width:50px;text-align:center;font-size:13px;color:#000080"><span class="u0">7</span></div>
<div style="left:1px;top:331px;width:49px;height:23px;background:#e2eef4"></div>
<div style="left:51px;top:332px;width:563px;height:22px;background:#ffffff"></div>
<div style="left:1px;top:335px;width:50px;text-align:center;font-size:13px;color:#000080"><span class="u0">8</span></div>
<div style="left:1px;top:354px;width:49px;height:23px;background:#e2eef4"></div>
<div style="left:51px;top:355px;width:563px;height:22px;background:#f2fcfc"></div>
<div style="left:1px;top:358px;width:50px;text-align:center;font-size:13px;color:#000080"><span class="u0">9</span></div>
<div style="left:1px;top:377px;width:49px;height:23px;background:#e2eef4"></div>
<div style="left:51px;top:378px;width:563px;height:22px;background:#ffffff"></div>
<div style="left:1px;top:381px;width:50px;text-align:center;font-size:13px;color:#000080"><span class="u0">10</span></div>
<div style="left:1px;top:400px;width:49px;height:23px;background:#e2eef4"></div>
<div style="left:51px;top:401px;width:563px;height:22px;background:#f2fcfc"></div>
<div style="left:1px;top:404px;width:50px;text-align:center;font-size:13px;color:#000080"><span class="u0">11</span></div>
<div style="left:1px;top:423px;width:49px;height:23px;background:#e2eef4"></div>
<div style="left:51px;top:424px;width:563px;height:22px;background:#ffffff"></div>
<div style="left:1px;top:427px;width:50px;text-align:center;font-size:13px;color:#000080"><span class="u0">12</span></div>
<div style="left:1px;top:446px;width:49px;height:23px;background:#e2eef4"></div>
<div style="left:51px;top:447px;width:563px;height:22px;background:#f2fcfc"></div>
<div style="left:1px;top:450px;width:50px;text-align:center;font-size:13px;color:#000080"><span class="u0">13</span></div>
<div style="left:1px;top:469px;width:49px;height:23px;background:#e2eef4"></div>
<div style="left:51px;top:470px;width:563px;height:22px;background:#ffffff"></div>
<div style="left:1px;top:473px;width:50px;text-align:center;font-size:13px;color:#000080"><span class="u0">14</span></div>
<div style="left:1px;top:148px;width:614px;height:1px;background:#a8cca0"></div>
<div style="left:1px;top:170px;width:614px;height:1px;background:#a8cca0"></div>
<div style="left:1px;top:193px;width:614px;height:1px;background:#a8cca0"></div>
<div style="left:1px;top:216px;width:614px;height:1px;background:#a8cca0"></div>
<div style="left:1px;top:239px;width:614px;height:1px;background:#a8cca0"></div>
<div style="left:1px;top:262px;width:614px;height:1px;background:#a8cca0"></div>
<div style="left:1px;top:285px;width:614px;height:1px;background:#a8cca0"></div>
<div style="left:1px;top:308px;width:614px;height:1px;background:#a8cca0"></div>
<div style="left:1px;top:331px;width:614px;height:1px;background:#a8cca0"></div>
<div style="left:1px;top:354px;width:614px;height:1px;background:#a8cca0"></div>
<div style="left:1px;top:377px;width:614px;height:1px;background:#a8cca0"></div>
<div style="left:1px;top:400px;width:614px;height:1px;background:#a8cca0"></div>
<div style="left:1px;top:423px;width:614px;height:1px;background:#a8cca0"></div>
<div style="left:1px;top:446px;width:614px;height:1px;background:#a8cca0"></div>
<div style="left:1px;top:469px;width:614px;height:1px;background:#a8cca0"></div>
<div style="left:1px;top:492px;width:614px;height:1px;background:#a8cca0"></div>
<div style="left:1px;top:148px;width:1px;height:327px;background:#a8cca0"></div>
<div style="left:50px;top:148px;width:1px;height:327px;background:#a8cca0"></div>
<div style="left:150px;top:148px;width:1px;height:327px;background:#a8cca0"></div>
<div style="left:330px;top:148px;width:1px;height:327px;background:#a8cca0"></div>
<div style="left:370px;top:148px;width:1px;height:327px;background:#a8cca0"></div>
<div style="left:420px;top:148px;width:1px;height:327px;background:#a8cca0"></div>
<div style="left:480px;top:148px;width:1px;height:327px;background:#a8cca0"></div>
<div style="left:550px;top:148px;width:1px;height:327px;background:#a8cca0"></div>
<div style="left:611px;top:148px;width:1px;height:327px;background:#a8cca0"></div>
<div style="left:680px;top:148px;width:1px;height:327px;background:#a8cca0"></div>
<div style="left:22px;top:159px;width:6px;height:1px;background:#000080"></div>
<div style="left:50px;top:152px;width:100px;text-align:center;color:#000080">产品编号</div>
<div style="left:150px;top:152px;width:180px;text-align:center;color:#000080">产品名称</div>
<div style="left:330px;top:152px;width:40px;text-align:center;color:#000080">单位</div>
<div style="left:370px;top:152px;width:50px;text-align:center;color:#000080">数量</div>
<div style="left:420px;top:152px;width:60px;text-align:center;color:#000080">单价</div>
<div style="left:480px;top:152px;width:70px;text-align:center;color:#000080">金额</div>
<div style="left:550px;top:152px;width:61px;text-align:center;color:#000080">备注</div>
<div style="left:94px;top:166px;width:521px;height:309px;background:#707070"></div>
<div style="left:95px;top:167px;width:520px;height:308px;background:#e4e4e8"></div>
<div style="left:96px;top:168px;width:519px;height:307px;background:#a6c8ee"></div>
<div style="left:99px;top:175px;font-size:12px;color:#800000">输入新的数量后按确定添加到单据</div>
<div style="left:96px;top:197px;width:519px;height:278px;background:#edf4e8"></div>
<div style="left:96px;top:197px;width:519px;height:24px;background:#f0f0f0"></div>
<div style="left:97px;top:198px;width:48px;height:23px;background:#f8e8f0"></div>
<div style="left:96px;top:221px;width:49px;height:254px;background:#f0f0f0"></div>
<div style="left:96px;top:221px;width:519px;height:1px;background:#a8cca0"></div>
<div style="left:96px;top:246px;width:519px;height:1px;background:#a8cca0"></div>
<div style="left:96px;top:271px;width:519px;height:1px;background:#a8cca0"></div>
<div style="left:96px;top:296px;width:519px;height:1px;background:#a8cca0"></div>
<div style="left:96px;top:321px;width:519px;height:1px;background:#a8cca0"></div>
<div style="left:96px;top:346px;width:519px;height:1px;background:#a8cca0"></div>
<div style="left:96px;top:371px;width:519px;height:1px;background:#a8cca0"></div>
<div style="left:96px;top:396px;width:519px;height:1px;background:#a8cca0"></div>
<div style="left:96px;top:421px;width:519px;height:1px;background:#a8cca0"></div>
<div style="left:96px;top:446px;width:519px;height:1px;background:#a8cca0"></div>
<div style="left:96px;top:471px;width:519px;height:1px;background:#a8cca0"></div>
<div style="left:96px;top:496px;width:519px;height:1px;background:#a8cca0"></div>
<div style="left:96px;top:197px;width:519px;height:1px;background:#a8cca0"></div>
<div style="left:96px;top:197px;width:1px;height:278px;background:#a8cca0"></div>
<div style="left:145px;top:197px;width:1px;height:278px;background:#a8cca0"></div>
<div style="left:207px;top:197px;width:1px;height:278px;background:#a8cca0"></div>
<div style="left:307px;top:197px;width:1px;height:278px;background:#a8cca0"></div>
<div style="left:487px;top:197px;width:1px;height:278px;background:#a8cca0"></div>
<div style="left:527px;top:197px;width:1px;height:278px;background:#a8cca0"></div>
<div style="left:577px;top:197px;width:1px;height:278px;background:#a8cca0"></div>
<div style="left:637px;top:197px;width:1px;height:278px;background:#a8cca0"></div>
<div style="left:117px;top:208px;width:6px;height:1px;background:#000080"></div>
<div style="left:146px;top:201px;width:62px;text-align:center;color:#000080">单据日期</div>
<div style="left:208px;top:201px;width:100px;text-align:center;color:#000080">产品编号</div>
<div style="left:308px;top:201px;width:180px;text-align:center;color:#000080">产品名称</div>
<div style="left:488px;top:201px;width:40px;text-align:center;color:#000080">单位</div>
<div style="left:528px;top:201px;width:50px;text-align:center;color:#000080">数量</div>
<div style="left:578px;top:201px;width:60px;text-align:center;color:#000080">单价</div>
<div style="left:97px;top:228px;width:49px;text-align:center;color:#000080"><span class="u0" style="font-size:12px">18</span></div>
<div style="left:150px;top:227px;"><span class="u0" style="font-size:11px">17-06-04</span></div>
<div style="left:211px;top:227px;width:95px;overflow:hidden">电胶布</div>
<div style="left:311px;top:227px;width:175px;overflow:hidden">电胶布 黑色一条<span class="u0" style="font-size:11px">10</span>卷</div>
<div style="left:491px;top:227px;">卷</div>
<div style="left:528px;top:227px;width:47px;text-align:right"><span class="u0" style="font-size:11px">10</span></div>
<div style="left:97px;top:253px;width:49px;text-align:center;color:#000080"><span class="u0" style="font-size:12px">19</span></div>
<div style="left:150px;top:252px;"><span class="u0" style="font-size:11px">17-05-31</span></div>
<div style="left:211px;top:252px;width:95px;overflow:hidden">厂牌套<span class="u0" style="font-size:11px">+</span>绳</div>
<div style="left:311px;top:252px;width:175px;overflow:hidden"><span class="u0" style="font-size:11px">T-032+</span>铁扣绳</div>
<div style="left:491px;top:252px;">套</div>
<div style="left:528px;top:252px;width:47px;text-align:right"><span class="u0" style="font-size:11px">200</span></div>
<div style="left:97px;top:278px;width:49px;text-align:center;color:#000080"><span class="u0" style="font-size:12px">20</span></div>
<div style="left:150px;top:277px;"><span class="u0" style="font-size:11px">17-05-28</span></div>
<div style="left:211px;top:272px;width:95px;height:24px;overflow:hidden"><div style="position:absolute;left:0;top:1px"><span class="u0" style="font-size:11px">80</span>列四联<span class="u0" style="font-size:11px">1/2&nbsp; 800</span></div><div style="position:absolute;left:0;top:18px">份</div></div>
<div style="left:311px;top:277px;width:175px;overflow:hidden"><span class="u0" style="font-size:11px">80</span>列四联<span class="u0" style="font-size:11px">1/2&nbsp; 800</span>份</div>
<div style="left:491px;top:277px;">箱</div>
<div style="left:528px;top:277px;width:47px;text-align:right"><span class="u0" style="font-size:11px">2</span></div>
<div style="left:97px;top:303px;width:49px;text-align:center;color:#000080"><span class="u0" style="font-size:12px">21</span></div>
<div style="left:150px;top:302px;"><span class="u0" style="font-size:11px">17-05-28</span></div>
<div style="left:211px;top:302px;width:95px;overflow:hidden">计算机 <span class="u0" style="font-size:11px">EL-200ML</span></div>
<div style="left:311px;top:302px;width:175px;overflow:hidden">计算机 <span class="u0" style="font-size:11px">EL-200ML</span></div>
<div style="left:491px;top:302px;">台</div>
<div style="left:528px;top:302px;width:47px;text-align:right"><span class="u0" style="font-size:11px">1</span></div>
<div style="left:97px;top:328px;width:49px;text-align:center;color:#000080"><span class="u0" style="font-size:12px">22</span></div>
<div style="left:150px;top:327px;"><span class="u0" style="font-size:11px">17-05-28</span></div>
<div style="left:211px;top:327px;width:95px;overflow:hidden"><span class="u0" style="font-size:11px">TA560-1 A5</span>软抄</div>
<div style="left:311px;top:322px;width:175px;height:24px;overflow:hidden"><div style="position:absolute;left:0;top:1px">笔记本<span class="u0" style="font-size:11px">FA550-1&nbsp; A5</span>软抄 添美 <span class="u0" style="font-size:11px">50</span></div><div style="position:absolute;left:0;top:18px">页</div></div>
<div style="left:491px;top:327px;">本</div>
<div style="left:528px;top:327px;width:47px;text-align:right"><span class="u0" style="font-size:11px">15</span></div>
<div style="left:97px;top:353px;width:49px;text-align:center;color:#000080"><span class="u0" style="font-size:12px">23</span></div>
<div style="left:150px;top:352px;"><span class="u0" style="font-size:11px">17-05-28</span></div>
<div style="left:211px;top:347px;width:95px;height:24px;overflow:hidden"><div style="position:absolute;left:0;top:1px"><span class="u0" style="font-size:11px">ZH-120-M2-BK</span>小</div><div style="position:absolute;left:0;top:18px">双头</div></div>
<div style="left:311px;top:347px;width:175px;height:24px;overflow:hidden"><div style="position:absolute;left:0;top:1px"><span class="u0" style="font-size:11px">ZH-120-M2-BK</span>小双头黑色<span class="u0" style="font-size:11px">/</span>红色<span class="u0" style="font-size:11px">/</span></div><div style="position:absolute;left:0;top:18px">蓝色</div></div>
<div style="left:491px;top:352px;">支</div>
<div style="left:528px;top:352px;width:47px;text-align:right"><span class="u0" style="font-size:11px">40</span></div>
<div style="left:613px;top:352px;"><span class="u0" style="font-size:11px">0</span></div>
<div style="left:97px;top:378px;width:49px;text-align:center;color:#000080"><span class="u0" style="font-size:12px">24</span></div>
<div style="left:150px;top:377px;"><span class="u0" style="font-size:11px">17-06-01</span></div>
<div style="left:211px;top:377px;width:95px;overflow:hidden"><span class="u0" style="font-size:11px">CA-021</span></div>
<div style="left:311px;top:377px;width:175px;overflow:hidden"><span class="u0" style="font-size:11px">CA-021</span>港益康三层口罩<span class="u0" style="font-size:11px">-</span>蓝色</div>
<div style="left:491px;top:377px;">盒</div>
<div style="left:528px;top:377px;width:47px;text-align:right"><span class="u0" style="font-size:11px">10</span></div>
<div style="left:97px;top:403px;width:49px;text-align:center;color:#000080"><span class="u0" style="font-size:12px">25</span></div>
<div style="left:150px;top:402px;"><span class="u0" style="font-size:11px">17-06-01</span></div>
<div style="left:211px;top:402px;width:95px;overflow:hidden"><span class="u0" style="font-size:11px">CA-028</span>港益康</div>
<div style="left:311px;top:402px;width:175px;overflow:hidden">防毒口罩<span class="u0" style="font-size:11px">/</span>活性碳，<span class="u0" style="font-size:11px">50</span>个<span class="u0" style="font-size:11px">/</span>盒</div>
<div style="left:491px;top:402px;">盒</div>
<div style="left:528px;top:402px;width:47px;text-align:right"><span class="u0" style="font-size:11px">15</span></div>
<div style="left:613px;top:402px;"><span class="u0" style="font-size:11px">1</span></div>
<div style="left:97px;top:428px;width:49px;text-align:center;color:#000080"><span class="u0" style="font-size:12px">26</span></div>
<div style="left:150px;top:427px;"></div>
<div style="left:211px;top:422px;width:95px;height:24px;overflow:hidden"><div style="position:absolute;left:0;top:1px">大吉牌 <span class="u0" style="font-size:11px">1234</span> 第二</div><div style="position:absolute;left:0;top:18px"></div></div>
<div style="left:311px;top:427px;width:175px;overflow:hidden"></div>
<div style="left:491px;top:427px;"></div>
<div style="left:528px;top:427px;width:47px;text-align:right"></div>
<div style="left:97px;top:453px;width:49px;text-align:center;color:#000080"><span class="u0" style="font-size:12px">27</span></div>
<div style="left:150px;top:452px;"></div>
<div style="left:211px;top:452px;width:95px;overflow:hidden"></div>
<div style="left:311px;top:452px;width:175px;overflow:hidden"></div>
<div style="left:491px;top:452px;"></div>
<div style="left:528px;top:452px;width:47px;text-align:right"></div>
<div style="left:217px;top:442px;width:1px;height:4px;background:#000"></div>
</body></html>
